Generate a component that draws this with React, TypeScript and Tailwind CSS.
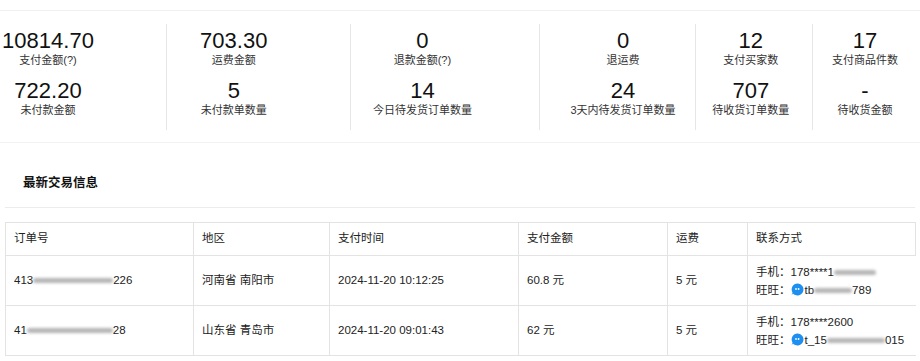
import React from "react";

const stats = [
  { w: "w-[167px]", ml: "ml-[-7px]", border: false, top: ["10814.70", "支付金额(?)"], bottom: ["722.20", "未付款金额"] },
  { w: "w-[186px]", ml: "ml-[12px]", border: true, top: ["703.30", "运费金额"], bottom: ["5", "未付款单数量"] },
  { w: "w-[190px]", ml: "ml-[16px]", border: true, top: ["0", "退款金额(?)"], bottom: ["14", "今日待发货订单数量"] },
  { w: "w-[157px]", ml: "ml-[28px]", border: true, top: ["0", "退运费"], bottom: ["24", "3天内待发货订单数量"] },
  { w: "w-[118px]", ml: "ml-0", border: true, top: ["12", "支付买家数"], bottom: ["707", "待收货订单数量"] },
  { w: "flex-1", ml: "ml-[-3px]", border: true, top: ["17", "支付商品件数"], bottom: ["-", "待收货金额"] },
];

function WangIcon() {
  return (
    <svg width="13" height="13" viewBox="0 0 13 13" className="inline-block align-[-2px] mr-px">
      <path d="M6.5 0.5a6 6 0 1 1-4.6 9.9L0.6 12.2l0.9-2.6A6 6 0 0 1 6.5 0.5z" fill="#1c8ff0" />
      <circle cx="5" cy="6" r="0.9" fill="#fff" />
      <circle cx="7.6" cy="6" r="0.9" fill="#fff" />
    </svg>
  );
}

// masked part of an id / phone number
function Blur({ w }: { w: string }) {
  return <span className={`inline-block ${w} h-[5px] align-middle rounded-full bg-[#b5b5b5] blur-[1.5px]`} />;
}

const orders = [
  {
    no: (
      <>
        413<Blur w="w-[80px]" />226
      </>
    ),
    area: "河南省 南阳市",
    time: "2024-11-20 10:12:25",
    pay: "60.8 元",
    fee: "5 元",
    phone: (
      <>
        178****1<Blur w="w-[42px]" />
      </>
    ),
    wang: (
      <>
        tb<Blur w="w-[38px]" />789
      </>
    ),
  },
  {
    no: (
      <>
        41<Blur w="w-[86px]" />28
      </>
    ),
    area: "山东省 青岛市",
    time: "2024-11-20 09:01:43",
    pay: "62 元",
    fee: "5 元",
    phone: <>178****2600</>,
    wang: (
      <>
        t_15<Blur w="w-[58px]" />015
      </>
    ),
  },
];

export default function App() {
  return (
    <div className="w-[920px] h-[361px] overflow-hidden bg-white text-[#222] font-['Liberation_Sans','Noto_Sans_CJK_SC',sans-serif]">
      <div className="h-[11px] border-b border-[#f0f0f0]" />

      {/* stats */}
      <div className="mt-[13px] flex h-[106px]">
        {stats.map((s, i) => (
          <div key={i} className={`${s.w} ${s.border ? "border-l border-[#e6e6e6]" : ""} pt-[4px]`}>
            <div className={`${s.ml} w-[110px] text-center whitespace-nowrap`}>
              <div className="text-[22px] leading-[25px] text-[#111]">{s.top[0]}</div>
              <div className="text-[11px] leading-[14px] text-[#333]">{s.top[1]}</div>
              <div className="mt-[11px] text-[22px] leading-[25px] text-[#111]">{s.bottom[0]}</div>
              <div className="text-[11px] leading-[14px] text-[#333]">{s.bottom[1]}</div>
            </div>
          </div>
        ))}
      </div>
      <div className="mt-[12px] border-b border-[#f2f2f2]" />

      {/* latest orders */}
      <div className="pl-[23px] pt-[33px] h-[64px] text-[12.5px] leading-[14px] font-bold text-[#111]">最新交易信息</div>
      <div className="ml-[5px] w-[910px] border-b border-[#ececec]" />

      <table className="mt-[14px] ml-[5px] w-[910px] table-fixed border-collapse text-[11.5px] text-[#222]">
        <colgroup>
          <col className="w-[188px]" />
          <col className="w-[136px]" />
          <col className="w-[189px]" />
          <col className="w-[149px]" />
          <col className="w-[80px]" />
          <col className="w-[168px]" />
        </colgroup>
        <thead>
          <tr className="h-[33px]">
            {["订单号", "地区", "支付时间", "支付金额", "运费", "联系方式"].map((h, i) => (
              <th key={i} className="border border-[#e3e3e3] px-[8px] text-left font-normal">
                {h}
              </th>
            ))}
          </tr>
        </thead>
        <tbody>
          {orders.map((o, i) => (
            <tr key={i} className="h-[50px]">
              <td className="border border-[#e3e3e3] px-[8px] whitespace-nowrap">{o.no}</td>
              <td className="border border-[#e3e3e3] px-[8px]">{o.area}</td>
              <td className="border border-[#e3e3e3] px-[8px]">{o.time}</td>
              <td className="border border-[#e3e3e3] px-[8px]">{o.pay}</td>
              <td className="border border-[#e3e3e3] px-[8px]">{o.fee}</td>
              <td className="border border-r-0 border-[#e3e3e3] px-[8px] leading-[18px] whitespace-nowrap">
                <div>手机：{o.phone}</div>
                <div>
                  旺旺：<WangIcon />
                  {o.wang}
                </div>
              </td>
            </tr>
          ))}
        </tbody>
      </table>
    </div>
  );
}
